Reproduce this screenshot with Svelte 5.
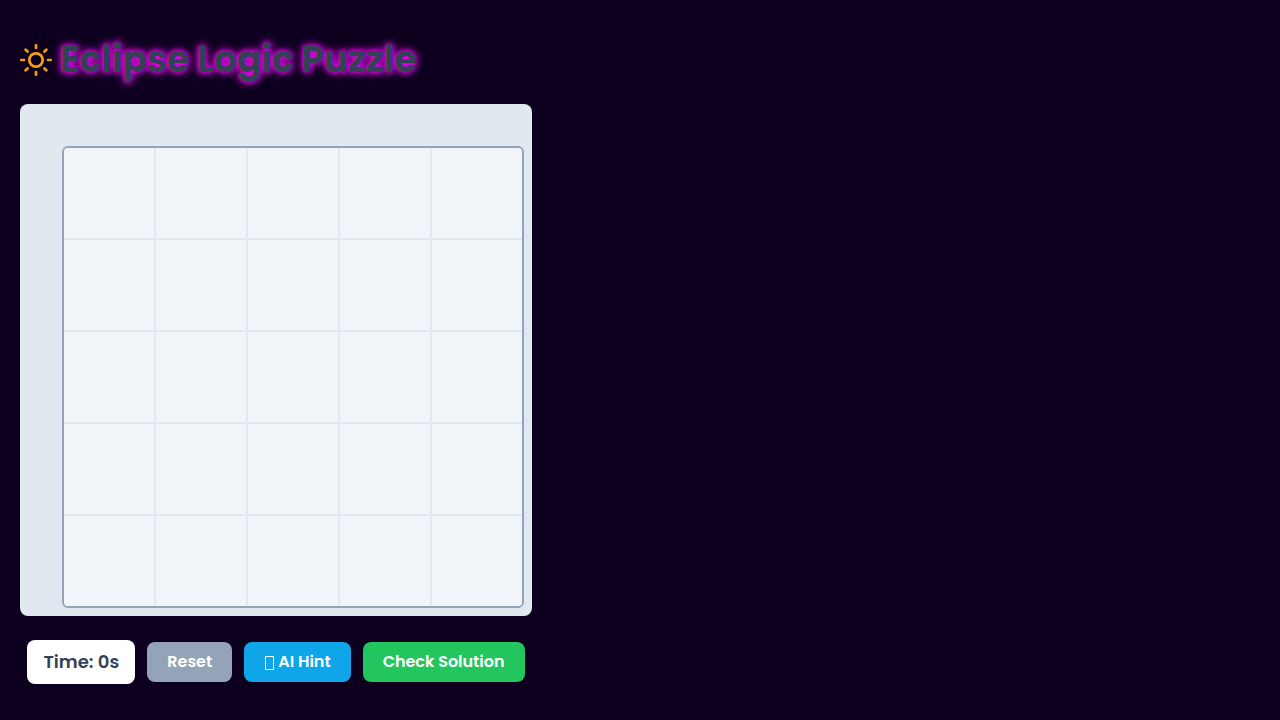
<script>
  const size = 5;
  let cells = $state(Array(size * size).fill(0));
  let seconds = $state(0);

  function cycle(i) {
    cells[i] = (cells[i] + 1) % 3;
  }

  function reset() {
    cells = Array(size * size).fill(0);
    seconds = 0;
  }
</script>

<main>
  <h1>
    <svg viewBox="0 0 32 32" width="32" height="32" aria-hidden="true">
      <circle cx="16" cy="16" r="6.7" />
      <path d="M16 1.3v2.7M16 28v2.7M5.6 5.6l1.9 1.9M24.5 24.5l1.9 1.9M1.3 16h2.7M28 16h2.7M7.5 24.5l-1.9 1.9M26.4 5.6l-1.9 1.9" />
    </svg>
    <span>Eclipse Logic Puzzle</span>
  </h1>

  <section class="board">
    <div class="grid">
      {#each cells as cell, i}
        <button class="cell" class:sun={cell === 1} class:moon={cell === 2} aria-label={`Row ${Math.floor(i / size) + 1}, column ${(i % size) + 1}`} onclick={() => cycle(i)}></button>
      {/each}
    </div>
  </section>

  <div class="controls">
    <div class="timer">Time: {seconds}s</div>
    <button class="action reset" onclick={reset}>Reset</button>
    <button class="action hint">
      <svg viewBox="0 0 10 14" width="10" height="14" aria-hidden="true">
        <rect x="1.5" y="0.5" width="8" height="13" />
      </svg>
      AI Hint
    </button>
    <button class="action check">Check Solution</button>
  </div>
</main>

<style>
  :global(body) {
    background: #0d001f;
  }

  main {
    box-sizing: border-box;
    max-width: 552px;
    padding: 32px 20px;
    color: #334155;
    font-family: Poppins, "Open Sans", sans-serif;
  }

  h1 {
    display: flex;
    align-items: center;
    gap: 8px;
    margin: 0 0 16px;
    font-size: 36px;
    font-weight: 700;
    line-height: 56px;
    white-space: nowrap;
    text-shadow: 0 0 5px #f0f, 0 0 10px #f0f;
  }

  h1 svg {
    flex: none;
    fill: none;
    stroke: #f59e0b;
    stroke-width: 2.7;
    stroke-linecap: round;
  }

  .board {
    display: grid;
    grid-template-columns: 32px 1fr;
    grid-template-rows: 32px auto;
    gap: 2px;
    padding: 8px;
    border-radius: 8px;
    background: #e2e8f0;
  }

  .grid {
    grid-area: 2 / 2;
    display: grid;
    grid-template-columns: repeat(5, 1fr);
    gap: 2px;
    overflow: hidden;
    border: 2px solid #94a3b8;
    border-radius: 6px;
    background: #e2e8f0;
  }

  .cell {
    aspect-ratio: 1;
    min-width: 0;
    padding: 0;
    border: 0;
    background: #f1f5f9;
    cursor: pointer;
  }

  .sun {
    background: radial-gradient(circle, #f59e0b 40%, #f1f5f9 42%);
  }

  .moon {
    background: radial-gradient(circle, #334155 40%, #f1f5f9 42%);
  }

  .controls {
    display: flex;
    flex-wrap: wrap;
    align-items: center;
    justify-content: center;
    gap: 12px;
    margin-top: 24px;
  }

  .timer {
    padding: 8px 16px;
    border-radius: 8px;
    background: #fff;
    font-size: 18px;
    font-weight: 600;
    line-height: 28px;
  }

  .action {
    padding: 8px 20px;
    border: 0;
    border-radius: 8px;
    color: #fff;
    font: inherit;
    font-size: 16px;
    font-weight: 600;
    line-height: 24px;
    cursor: pointer;
  }

  .reset {
    background: #94a3b8;
  }

  .hint {
    display: flex;
    align-items: center;
    gap: 4px;
    background: #0ea5e9;
  }

  .hint svg {
    margin-top: 2px;
    fill: none;
    stroke: #fff;
    stroke-width: 1;
  }

  .check {
    background: #22c55e;
  }
</style>
